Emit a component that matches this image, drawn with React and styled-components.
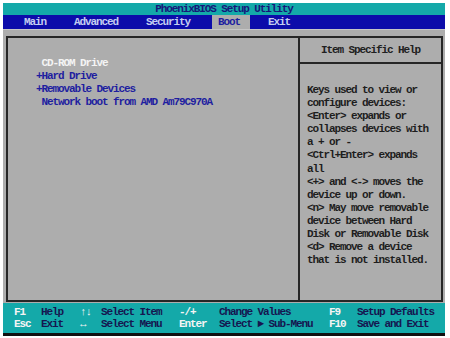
import React from "react";
import styled, { createGlobalStyle } from "styled-components";

const TEAL = "#14a9a9";
const BLUE = "#0c0caa";
const GRAY = "#adadad";
const DARK = "#262626";
const NAVY = "#1e1ea0";

const GlobalStyle = createGlobalStyle`
  html, body { margin: 0; padding: 0; background: #ffffff; }
  body { font-family: "Liberation Mono", "DejaVu Sans Mono", monospace; }
`;

const Screen = styled.div`
  width: 442px;
  margin: 3px 0 0 3px;
  font-family: "Liberation Mono", "DejaVu Sans Mono", monospace;
  font-weight: bold;
  font-size: 11px;
  letter-spacing: -1.1px;
  white-space: pre;
`;

const TitleBar = styled.div`
  height: 12px;
  line-height: 12px;
  background: ${TEAL};
  color: #16167a;
  text-align: center;
`;

const MenuBar = styled.div`
  height: 14px;
  line-height: 15px;
  background: ${BLUE};
  display: flex;
  padding-left: 15px;
`;

const Tab = styled.span`
  padding: 0 10px 0 6px;
  margin-right: 12px;
  background: ${(p) => (p.$active ? GRAY : "transparent")};
  color: ${(p) => (p.$active ? NAVY : "#c4cdf0")};
`;

const Body = styled.div`
  box-sizing: border-box;
  height: 274px;
  background: ${GRAY};
  border-top: 1px solid #c6c6c6;
  padding: 6px 2px 1px 3px;
`;

const Frame = styled.div`
  box-sizing: border-box;
  height: 100%;
  border: 2px solid ${DARK};
  display: grid;
  grid-template-columns: 290px 1fr;
`;

const ItemList = styled.div`
  padding: 19px 0 0 28px;
  line-height: 13px;
  display: flex;
  flex-direction: column;
`;

const Item = styled.div`
  color: ${(p) => (p.$selected ? "#f4f4f4" : NAVY)};
`;

const HelpColumn = styled.div`
  border-left: 2px solid ${DARK};
  display: flex;
  flex-direction: column;
`;

const HelpHeader = styled.div`
  height: 24px;
  line-height: 24px;
  border-bottom: 2px solid ${DARK};
  text-align: center;
  color: #202020;
`;

const HelpText = styled.div`
  padding: 20px 0 0 7px;
  line-height: 13.1px;
  color: #1e1e1e;
`;

const Footer = styled.div`
  box-sizing: border-box;
  height: 30px;
  background: ${TEAL};
  padding: 3px 0 3px 11px;
  display: grid;
  grid-template-columns: 27px 39px 21px 78px 40px 110px 28px 1fr;
  grid-auto-rows: 12px;
  line-height: 12px;
`;

const Key = styled.span`
  color: #f4f4f4;
`;

const Desc = styled.span`
  color: #161650;
`;

const BottomEdge = styled.div`
  height: 3px;
  background: #111111;
`;

const items = [
  { text: " CD-ROM Drive", selected: true },
  { text: "+Hard Drive" },
  { text: "+Removable Devices" },
  { text: " Network boot from AMD Am79C970A" },
];

const helpLines = [
  "Keys used to view or",
  "configure devices:",
  "<Enter> expands or",
  "collapses devices with",
  "a + or -",
  "<Ctrl+Enter> expands",
  "all",
  "<+> and <-> moves the",
  "device up or down.",
  "<n> May move removable",
  "device between Hard",
  "Disk or Removable Disk",
  "<d> Remove a device",
  "that is not installed.",
];

const footerRows = [
  ["F1", "Help", "↑↓", "Select Item", "-/+", "Change Values", "F9", "Setup Defaults"],
  ["Esc", "Exit", "↔", "Select Menu", "Enter", "Select ► Sub-Menu", "F10", "Save and Exit"],
];

const tabs = ["Main", "Advanced", "Security", "Boot", "Exit"];

export default function App() {
  return (
    <>
      <GlobalStyle />
      <Screen>
        <TitleBar>PhoenixBIOS Setup Utility</TitleBar>
        <MenuBar>
          {tabs.map((t) => (
            <Tab key={t} $active={t === "Boot"}>
              {t}
            </Tab>
          ))}
        </MenuBar>
        <Body>
          <Frame>
            <ItemList>
              {items.map((it) => (
                <Item key={it.text} $selected={it.selected}>
                  {it.text}
                </Item>
              ))}
            </ItemList>
            <HelpColumn>
              <HelpHeader>Item Specific Help</HelpHeader>
              <HelpText>
                {helpLines.map((l, i) => (
                  <div key={i}>{l}</div>
                ))}
              </HelpText>
            </HelpColumn>
          </Frame>
        </Body>
        <Footer>
          {footerRows.map((row) =>
            row.map((cell, i) =>
              i % 2 === 0 ? (
                <Key key={row[0] + i}>{cell}</Key>
              ) : (
                <Desc key={row[0] + i}>{cell}</Desc>
              )
            )
          )}
        </Footer>
        <BottomEdge />
      </Screen>
    </>
  );
}
